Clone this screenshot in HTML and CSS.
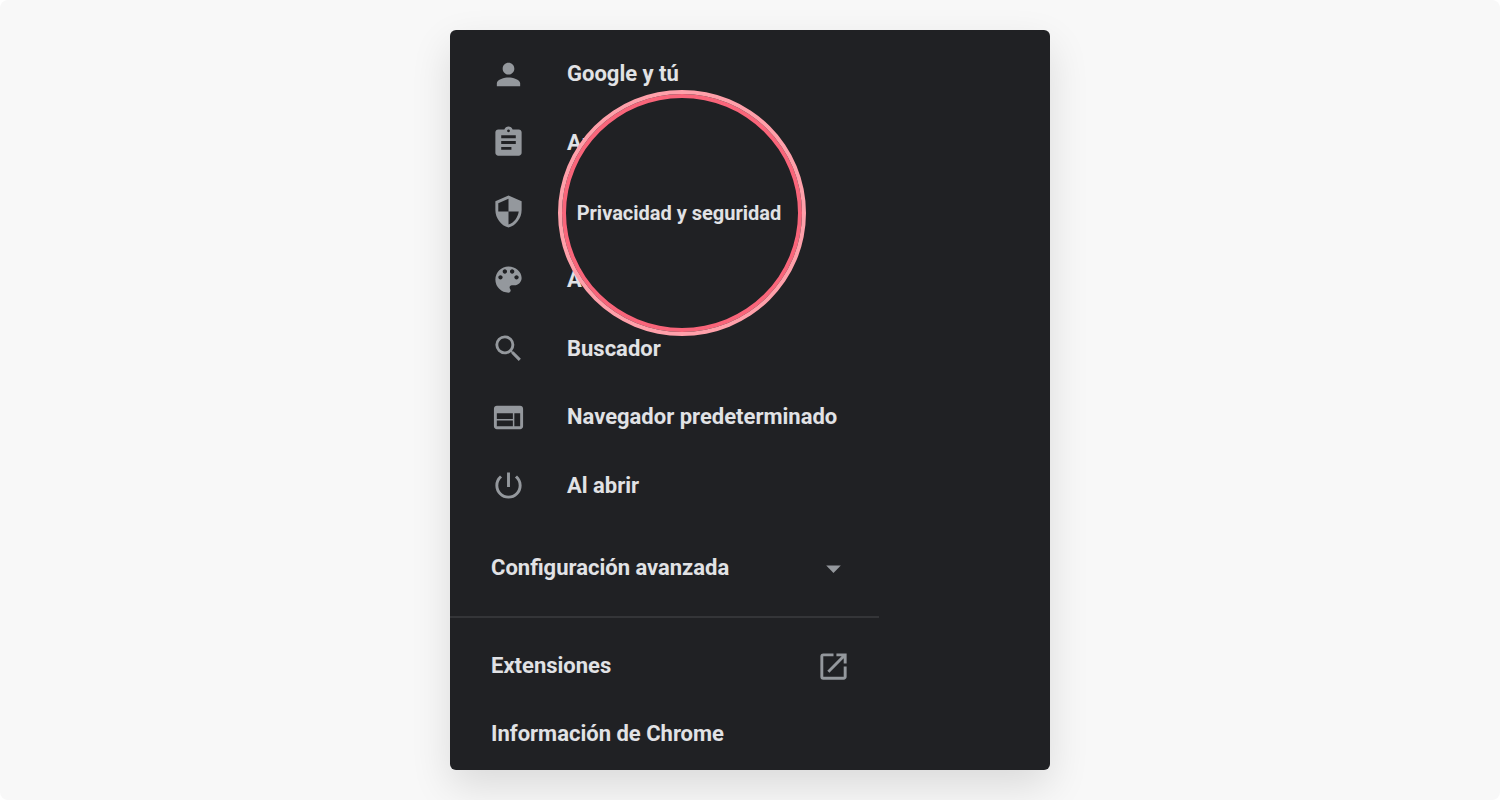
FILE: index.html
```html
<!DOCTYPE html>
<html lang="es">
<head>
<meta charset="utf-8">
<meta name="viewport" content="width=device-width, initial-scale=1">
<title>Configuración</title>
<link rel="stylesheet" href="styles.css">
</head>
<body>
<main class="stage">
  <section class="card">
    <nav class="sidebar">
      <ul class="menu">
        <li class="menu-item"><a class="row" href="#google">
          <svg class="icon" viewBox="0 0 24 24" aria-hidden="true"><path d="M12 12c2.200 0 4-1.800 4-4s-1.800-4-4-4-4 1.800-4 4 1.800 4 4 4zm0 2c-2.700 0-8 1.300-8 4v2h16v-2c0-2.700-5.300-4-8-4z"/></svg>
          <span>Google y tú</span></a></li>
        <li class="menu-item"><a class="row" href="#autocompletar">
          <svg class="icon" viewBox="0 0 24 24" aria-hidden="true"><path d="M19 3h-4.180C14.400 1.840 13.300 1 12 1s-2.400.840-2.820 2H5c-1.100 0-2 .9-2 2v14c0 1.100.9 2 2 2h14c1.100 0 2-.9 2-2V5c0-1.100-.9-2-2-2zm-7 0c.55 0 1 .45 1 1s-.45 1-1 1-1-.45-1-1 .45-1 1-1zm2 14H7v-2h7v2zm3-4H7v-2h10v2zm0-4H7V7h10v2z"/></svg>
          <span>Autocompletar</span></a></li>
        <li class="menu-item"><a class="row" href="#privacidad">
          <svg class="icon" viewBox="0 0 24 24" aria-hidden="true"><path d="M12 1L3 5v6c0 5.550 3.840 10.740 9 12 5.160-1.260 9-6.450 9-12V5l-9-4zm0 10.990h7c-.53 4.120-3.280 7.790-7 8.940V12H5V6.300l7-3.110v8.800z"/></svg>
          <span class="lens">Privacidad y seguridad</span></a></li>
        <li class="menu-item"><a class="row" href="#aspecto">
          <svg class="icon" viewBox="0 0 24 24" aria-hidden="true"><path d="M12 3a9 9 0 0 0 0 18c.83 0 1.500-.67 1.500-1.500 0-.39-.15-.74-.39-1.010-.23-.26-.38-.61-.38-.99 0-.83.67-1.500 1.500-1.500H16c2.760 0 5-2.240 5-5 0-4.420-4.030-8-9-8zm-5.500 9c-.83 0-1.500-.67-1.500-1.500S5.670 9 6.500 9 8 9.670 8 10.500 7.330 12 6.500 12zm3-4C8.670 8 8 7.330 8 6.500S8.670 5 9.500 5s1.500.67 1.500 1.500S10.330 8 9.500 8zm5 0c-.83 0-1.500-.67-1.500-1.500S13.670 5 14.500 5s1.500.67 1.500 1.500S15.330 8 14.500 8zm3 4c-.83 0-1.500-.67-1.500-1.500S16.670 9 17.500 9s1.500.67 1.500 1.500-.67 1.500-1.500 1.500z"/></svg>
          <span>Aspecto</span></a></li>
        <li class="menu-item"><a class="row" href="#buscador">
          <svg class="icon" viewBox="0 0 24 24" aria-hidden="true"><path d="M15.500 14h-.79l-.28-.27A6.470 6.470 0 0 0 16 9.500 6.500 6.500 0 1 0 9.500 16c1.610 0 3.090-.59 4.230-1.570l.27.280v.790l5 4.990L20.490 19l-4.990-5zm-6 0C7.010 14 5 11.990 5 9.500S7.010 5 9.500 5 14 7.010 14 9.500 11.990 14 9.500 14z"/></svg>
          <span>Buscador</span></a></li>
        <li class="menu-item"><a class="row" href="#navegador">
          <svg class="icon" viewBox="0 0 24 24" aria-hidden="true"><path d="M20 4H4c-1.100 0-1.990.9-1.990 2L2 18c0 1.100.9 2 2 2h16c1.100 0 2-.9 2-2V6c0-1.100-.9-2-2-2zm-5 14H4v-4h11v4zm0-5H4V9h11v4zm5 5h-4V9h4v9z"/></svg>
          <span>Navegador predeterminado</span></a></li>
        <li class="menu-item"><a class="row" href="#abrir">
          <svg class="icon" viewBox="0 0 24 24" aria-hidden="true"><path d="M13 3h-2v10h2V3zm4.830 2.170l-1.420 1.420A6.920 6.920 0 0 1 19 12c0 3.870-3.130 7-7 7s-7-3.130-7-7c0-2.190 1.010-4.140 2.580-5.420L6.170 5.170A8.930 8.930 0 0 0 3 12a9 9 0 0 0 18 0c0-2.740-1.230-5.180-3.170-6.830z"/></svg>
          <span>Al abrir</span></a></li>
      </ul>
      <div class="advanced">
        <button class="row row-wide" type="button" aria-expanded="false">
          <span>Configuración avanzada</span>
          <svg class="icon" viewBox="0 0 24 24" aria-hidden="true"><path d="M7 10l5 5 5-5z"/></svg>
        </button>
      </div>
      <div class="links">
        <a class="row row-wide" href="#extensiones">
          <span>Extensiones</span>
          <svg class="icon" viewBox="0 0 24 24" aria-hidden="true"><path d="M19 19H5V5h7V3H5a2 2 0 0 0-2 2v14a2 2 0 0 0 2 2h14c1.100 0 2-.9 2-2v-7h-2v7zM14 3v2h3.590l-9.830 9.830 1.410 1.410L19 6.410V10h2V3h-7z"/></svg>
        </a>
        <a class="row row-wide" href="#informacion"><span>Información de Chrome</span></a>
      </div>
    </nav>
  </section>
</main>
</body>
</html>
```
FILE: styles.css
```css
* {
  box-sizing: border-box;
}

body {
  margin: 0;
  background: #fff;
  font-family: Roboto, "Liberation Sans", sans-serif;
}

.stage {
  display: flex;
  justify-content: center;
  min-height: 100vh;
  padding: 30px;
  border-radius: 8px;
  background: #f8f8f8;
  overflow: hidden;
}

.card {
  width: 100%;
  max-width: 600px;
  border-radius: 6px;
  background: #202124;
  box-shadow: 0 16px 40px rgba(0, 0, 0, 0.12);
}

.sidebar {
  max-width: 429px;
  padding-top: 10px;
}

.menu {
  display: grid;
  grid-auto-rows: 1fr;
  min-height: 480px;
  margin: 0;
  padding: 0;
  list-style: none;
}

.menu-item {
  display: grid;
}

.row {
  position: relative;
  display: flex;
  align-items: center;
  gap: 41px;
  width: 100%;
  min-height: 68px;
  padding: 0 28px 0 41px;
  border: 0;
  background: none;
  color: #e1e2e5;
  font: 700 22px/28px Roboto, "Liberation Sans", sans-serif;
  text-align: left;
  text-decoration: none;
  white-space: nowrap;
}

.row-wide {
  justify-content: space-between;
}

.icon {
  flex: none;
  width: 35px;
  height: 35px;
  fill: #94989d;
}

.lens {
  position: absolute;
  z-index: 1;
  top: 50%;
  left: 108px;
  display: grid;
  place-items: center;
  width: 248px;
  height: 246px;
  margin-top: -121px;
  padding-right: 6px;
  border: 4px solid #ffa0aa;
  border-radius: 50%;
  background: #202124;
  box-shadow: inset 0 0 0 4px #f9657a;
  font-size: 20px;
}

.advanced {
  padding: 14px 0;
  border-bottom: 2px solid #343538;
}

.links {
  padding-top: 14px;
}
```
